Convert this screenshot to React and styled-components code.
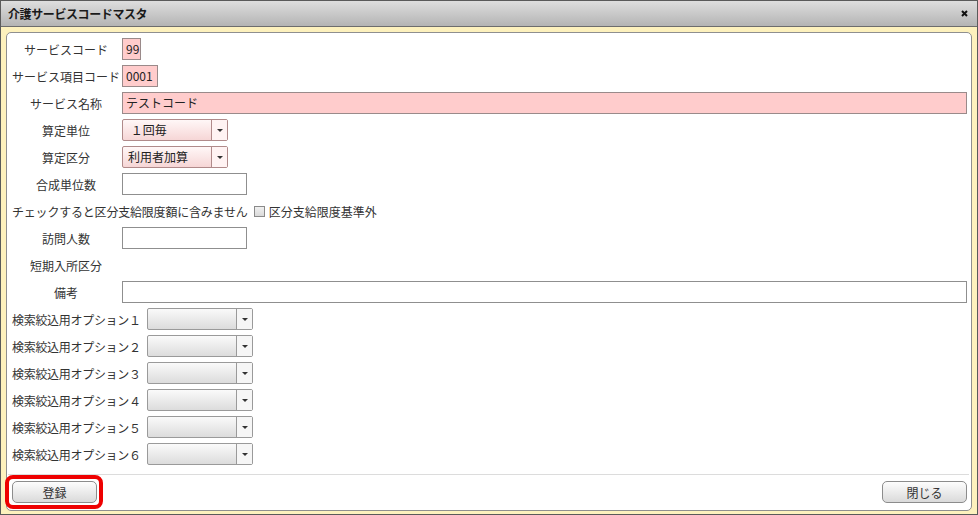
import React from 'react';
import styled, { createGlobalStyle } from 'styled-components';

const GlobalStyle = createGlobalStyle`
  html, body {
    margin: 0;
    padding: 0;
    background: #ffffff;
  }
  body {
    font-family: 'Noto Sans CJK JP', 'Noto Sans', sans-serif;
    font-size: 12px;
    color: #333;
  }
`;

const Window = styled.div`
  width: 978px;
  height: 515px;
  box-sizing: border-box;
  border: 1px solid #5a5a5a;
  display: flex;
  flex-direction: column;
  background: #fdf1bd;
`;

const TitleBar = styled.div`
  height: 25px;
  flex: none;
  display: flex;
  align-items: center;
  justify-content: space-between;
  padding: 0 8px 0 7px;
  background: linear-gradient(#dedede, #b4b4b4);
  border-bottom: 1px solid #6d6d6d;
`;

const Title = styled.span`
  font-weight: bold;
  font-size: 12px;
  color: #1a1a1a;
  letter-spacing: -0.4px;
`;

const CloseIcon = styled.svg`
  width: 7px;
  height: 7px;
  margin-right: 1px;
`;

const Body = styled.div`
  flex: 1;
  display: flex;
  padding: 5px 5px 3px 5px;
`;

const Panel = styled.div`
  flex: 1;
  display: flex;
  flex-direction: column;
  background: #ffffff;
  border: 1px solid #8f8f8f;
  border-radius: 5px;
  padding: 5px 4px 5px 4px;
`;

const Form = styled.div`
  display: flex;
  flex-direction: column;
  gap: 5px;
`;

const Row = styled.div`
  display: flex;
  align-items: center;
  height: 22px;
`;

const Label = styled.span`
  width: 110px;
  margin-right: 1px;
  text-align: center;
  white-space: nowrap;
  color: #333;
`;

const OptionLabel = styled.span`
  width: 135px;
  padding-left: 1px;
  white-space: nowrap;
  letter-spacing: -0.3px;
  color: #333;
`;

const TextBox = styled.div`
  box-sizing: border-box;
  height: 22px;
  width: ${p => p.$w || '125px'};
  flex: ${p => (p.$grow ? 1 : 'none')};
  border: 1px solid ${p => (p.$required ? '#9a8a8a' : '#8f8f8f')};
  background: ${p => (p.$required ? '#ffcccc' : '#ffffff')};
  padding: 0 3px;
  line-height: 20px;
  color: #222;
  font-size: 12px;
  ${p => p.$grow && 'width: auto;'}
`;

const Select = styled.div`
  box-sizing: border-box;
  height: 22px;
  width: ${p => p.$w || '106px'};
  display: flex;
  border: 1px solid ${p => (p.$required ? '#b08a8a' : '#9a9a9a')};
  border-radius: 2px;
  background: ${p =>
    p.$required
      ? 'linear-gradient(#fff7f7, #f6d6d6)'
      : 'linear-gradient(#fafafa, #dcdcdc)'};
`;

const SelectText = styled.span`
  flex: 1;
  padding-left: 5px;
  line-height: 20px;
  color: #222;
  white-space: nowrap;
`;

const SelectArrow = styled.span`
  width: 15px;
  display: flex;
  align-items: center;
  justify-content: center;
  border-left: 1px solid ${p => (p.$required ? '#b08a8a' : '#9a9a9a')};
  background: ${p => (p.$required ? '#fff3f3' : '#f6f6f6')};
  &::after {
    content: '';
    border-left: 3px solid transparent;
    border-right: 3px solid transparent;
    border-top: 3px solid #333;
  }
`;

const CheckText = styled.span`
  padding-left: 1px;
  white-space: nowrap;
  letter-spacing: -0.2px;
  color: #333;
`;

const CheckBox = styled.span`
  width: 9px;
  height: 9px;
  margin: 0 4px 0 6px;
  border: 1px solid #8a8a8a;
  background: linear-gradient(#f0f0f0, #dadada);
`;

const CheckLabel = styled.span`
  white-space: nowrap;
  color: #333;
`;

const Separator = styled.div`
  height: 1px;
  margin: 9px -2px 6px -3px;
  background: #dcdcdc;
`;

const Footer = styled.div`
  display: flex;
  justify-content: space-between;
  padding-left: 1px;
`;

const ButtonWrap = styled.div`
  position: relative;
  &::after {
    content: '';
    position: absolute;
    top: -6px;
    left: -7px;
    right: -6px;
    bottom: -6px;
    border: 4px solid #ee0000;
    border-radius: 8px;
    pointer-events: none;
  }
`;

const Button = styled.button`
  box-sizing: border-box;
  width: ${p => p.$w || '85px'};
  height: 22px;
  padding: 0;
  border: 1px solid #8c8c8c;
  border-radius: 5px;
  background: linear-gradient(#fdfdfd, #dadada);
  font-family: 'Noto Sans CJK JP', 'Noto Sans', sans-serif;
  font-size: 12px;
  color: #333;
`;

const options = ['１', '２', '３', '４', '５', '６'];

const App = () => {
  return (
    <>
      <GlobalStyle />
      <Window>
        <TitleBar>
          <Title>介護サービスコードマスタ</Title>
          <CloseIcon viewBox="0 0 7 7">
            <path d="M1 1 L6 6 M6 1 L1 6" stroke="#111" strokeWidth="2" />
          </CloseIcon>
        </TitleBar>
        <Body>
          <Panel>
            <Form>
              <Row>
                <Label>サービスコード</Label>
                <TextBox $required $w="19px">99</TextBox>
              </Row>
              <Row>
                <Label>サービス項目コード</Label>
                <TextBox $required $w="36px">0001</TextBox>
              </Row>
              <Row>
                <Label>サービス名称</Label>
                <TextBox $required $grow>テストコード</TextBox>
              </Row>
              <Row>
                <Label>算定単位</Label>
                <Select $required>
                  <SelectText>&nbsp;１回毎</SelectText>
                  <SelectArrow $required />
                </Select>
              </Row>
              <Row>
                <Label>算定区分</Label>
                <Select $required>
                  <SelectText>利用者加算</SelectText>
                  <SelectArrow $required />
                </Select>
              </Row>
              <Row>
                <Label>合成単位数</Label>
                <TextBox />
              </Row>
              <Row>
                <CheckText>チェックすると区分支給限度額に含みません</CheckText>
                <CheckBox />
                <CheckLabel>区分支給限度基準外</CheckLabel>
              </Row>
              <Row>
                <Label>訪問人数</Label>
                <TextBox />
              </Row>
              <Row>
                <Label>短期入所区分</Label>
              </Row>
              <Row>
                <Label>備考</Label>
                <TextBox $grow />
              </Row>
              {options.map(n => (
                <Row key={n}>
                  <OptionLabel>検索絞込用オプション{n}</OptionLabel>
                  <Select>
                    <SelectText />
                    <SelectArrow />
                  </Select>
                </Row>
              ))}
            </Form>
            <Separator />
            <Footer>
              <ButtonWrap>
                <Button>登録</Button>
              </ButtonWrap>
              <Button>閉じる</Button>
            </Footer>
          </Panel>
        </Body>
      </Window>
    </>
  );
};

export default App;
